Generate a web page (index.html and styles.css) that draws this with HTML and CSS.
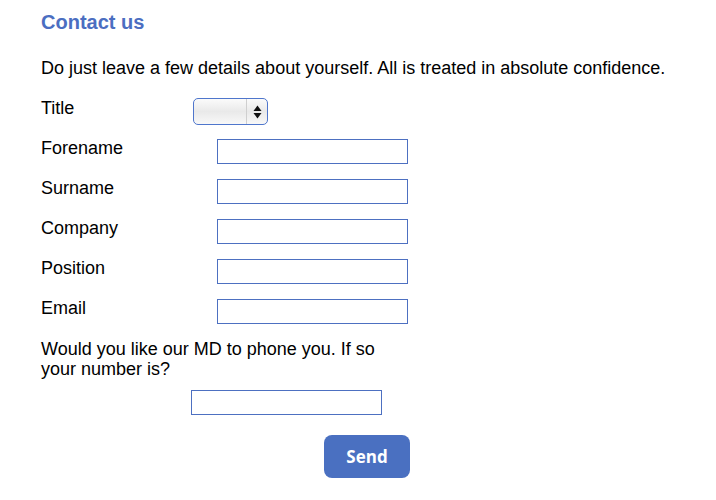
FILE: index.html
```html
<!DOCTYPE html>
<html lang="en">

<head>
  <meta charset="UTF-8" />
  <meta name="viewport" content="width=device-width, initial-scale=1.0" />
  <title>Contact us</title>
  <link rel="stylesheet" href="styles.css">
</head>

<body>
  <main class="contact">
    <h1>Contact us</h1>
    <p class="intro">Do just leave a few details about yourself. All is treated in absolute confidence.</p>

    <form class="contact-form" method="post" action="#">
      <div class="row">
        <label for="title">Title</label>
        <span class="select-box">
          <select id="title" name="title">
            <option value=""></option>
            <option>Mr</option>
            <option>Mrs</option>
            <option>Ms</option>
            <option>Dr</option>
          </select>
          <span class="select-arrows">
            <svg width="9" height="14" viewBox="0 0 9 14">
              <path d="M4.5 0.5 L8.5 6 L0.5 6 Z" fill="#111" />
              <path d="M0.5 8 L8.5 8 L4.5 13.5 Z" fill="#111" />
            </svg>
          </span>
        </span>
      </div>
      <div class="row">
        <label for="forename">Forename</label>
        <input type="text" id="forename" name="forename">
      </div>
      <div class="row">
        <label for="surname">Surname</label>
        <input type="text" id="surname" name="surname">
      </div>
      <div class="row">
        <label for="company">Company</label>
        <input type="text" id="company" name="company">
      </div>
      <div class="row">
        <label for="position">Position</label>
        <input type="text" id="position" name="position">
      </div>
      <div class="row">
        <label for="email">Email</label>
        <input type="text" id="email" name="email">
      </div>

      <label class="question" for="phone">Would you like our MD to phone you. If so your number is?</label>
      <div class="phone-row"><input type="text" id="phone" name="phone"></div>

      <div class="submit-row"><button type="submit">Send</button></div>
    </form>
  </main>
</body>

</html>
```

FILE: styles.css
```css
* {
  margin: 0;
  padding: 0;
  box-sizing: border-box;
}

body {
  font-family: 'Liberation Sans', Arial, sans-serif;
  font-size: 18px;
  line-height: 20px;
  color: #000;
  background: #fff;
}

.contact {
  padding: 10px 41px;
}

h1 {
  font-size: 20px;
  line-height: 24px;
  font-weight: 700;
  color: #4b6ec1;
}

p.intro {
  margin-top: 24px;
}

.contact-form {
  margin-top: 19px;
}

.row {
  display: flex;
  align-items: flex-start;
  height: 40px;
}

.row label {
  width: 152px;
  padding-top: 1px;
}

.row input {
  margin: 2px 0 0 24px;
}

input[type="text"] {
  width: 191px;
  height: 25px;
  border: 1px solid #4d70c1;
  background: #fff;
  font: inherit;
  padding: 0 4px;
  outline: none;
}

.select-box {
  display: flex;
  width: 75px;
  height: 27px;
  margin-top: 1px;
  border: 1px solid #4f76cc;
  border-radius: 5px;
  background: linear-gradient(#fbfbfb, #e9e9e9 50%, #f8f8f8);
  overflow: hidden;
}

.select-box select {
  flex: 1;
  min-width: 0;
  appearance: none;
  -webkit-appearance: none;
  border: none;
  background: transparent;
  font: inherit;
  outline: none;
}

.select-arrows {
  display: flex;
  align-items: center;
  justify-content: center;
  width: 21px;
  border-left: 1px solid #cfcfcf;
}

.question {
  display: block;
  width: 345px;
  margin-top: 2px;
}

.phone-row {
  margin: 11px 0 0 150px;
}

.submit-row {
  margin: 20px 0 0 283px;
}

.submit-row button {
  width: 86px;
  height: 43px;
  border: none;
  border-radius: 8px;
  background: #4a70c1;
  color: #fff;
  font-family: 'Open Sans', sans-serif;
  font-size: 17px;
  font-weight: 700;
  cursor: pointer;
}
```
